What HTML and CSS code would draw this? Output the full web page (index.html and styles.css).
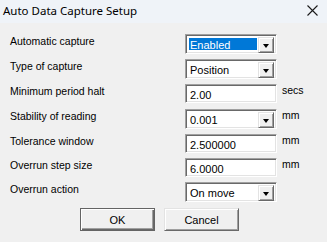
FILE: index.html
```html
<!DOCTYPE html>
<html>
<head>
<meta charset="utf-8">
<link rel="stylesheet" href="styles.css">
</head>
<body>
<div class="dialog">
  <div class="titlebar">
    <span class="title">Auto Data Capture Setup</span>
    <svg class="close" width="11" height="11" viewBox="0 0 11 11"><path d="M0.5 0.5 L10.5 10.5 M10.5 0.5 L0.5 10.5" stroke="#1a1a1a" stroke-width="1.1" fill="none"/></svg>
  </div>
  <div class="form">
    <div class="lbl">Automatic capture</div>
    <div class="combo sunken"><div class="val sel">Enabled</div><div class="btn raised"><span class="tri"></span></div></div>
    <div class="unit"></div>

    <div class="lbl">Type of capture</div>
    <div class="combo sunken"><div class="val">Position</div><div class="btn raised"><span class="tri"></span></div></div>
    <div class="unit"></div>

    <div class="lbl">Minimum period halt</div>
    <div class="edit sunken">2.00</div>
    <div class="unit">secs</div>

    <div class="lbl">Stability of reading</div>
    <div class="combo sunken"><div class="val">0.001</div><div class="btn raised"><span class="tri"></span></div></div>
    <div class="unit">mm</div>

    <div class="lbl">Tolerance window</div>
    <div class="edit sunken">2.500000</div>
    <div class="unit">mm</div>

    <div class="lbl">Overrun step size</div>
    <div class="edit sunken">6.0000</div>
    <div class="unit">mm</div>

    <div class="lbl">Overrun action</div>
    <div class="combo sunken"><div class="val">On move</div><div class="btn raised"><span class="tri"></span></div></div>
    <div class="unit"></div>
  </div>
  <div class="buttons">
    <div class="pbtn default">OK</div>
    <div class="pbtn raised">Cancel</div>
  </div>
</div>
</body>
</html>
```
FILE: styles.css
```css
html, body {
  margin: 0;
  padding: 0;
  background: #f0f0f0;
}
.dialog {
  width: 327px;
  height: 242px;
  background: #f0f0f0;
  font-family: "Liberation Sans", Arial, sans-serif;
  font-size: 11px;
  color: #000;
  overflow: hidden;
}
.titlebar {
  height: 23px;
  background: #eff3f8;
  display: flex;
  align-items: center;
  padding-left: 3px;
  padding-right: 9px;
}
.title {
  font-family: "Noto Sans", "Open Sans", sans-serif;
  font-size: 11.5px;
  color: #000;
  flex: 1;
  margin-top: -2px;
}
.close {
  margin-top: -3px;
}
.form {
  display: grid;
  grid-template-columns: 170px 92px auto;
  grid-template-rows: 25px 25px 25px 25px 24px 24px 20px;
  column-gap: 5px;
  padding: 11px 0 0 10px;
  align-items: start;
}
.lbl, .unit {
  line-height: 14px;
  font-size: 10.5px;
}
.unit {
  margin-top: -1px;
}
.sunken {
  border: 1px solid;
  border-color: #a0a0a0 #ffffff #ffffff #a0a0a0;
  box-shadow: inset 1px 1px #696969, inset -1px -1px #e3e3e3;
  background: #fff;
  box-sizing: border-box;
}
.raised {
  border: 1px solid;
  border-color: #e3e3e3 #696969 #696969 #e3e3e3;
  box-shadow: inset 1px 1px #ffffff, inset -1px -1px #a0a0a0;
  background: #f0f0f0;
  box-sizing: border-box;
}
.combo {
  height: 20px;
  display: flex;
  padding: 2px;
}
.val {
  flex: 1;
  line-height: 16px;
  padding-left: 2px;
  font-size: 11px;
}
.val.sel {
  background: #0078d7;
  color: #fff;
  margin: 1px 1px 1px 1px;
  line-height: 14px;
  padding-left: 1px;
}
.btn {
  width: 16px;
  height: 16px;
  display: flex;
  align-items: center;
  justify-content: center;
}
.tri {
  width: 0;
  height: 0;
  border-left: 3.5px solid transparent;
  border-right: 3.5px solid transparent;
  border-top: 4px solid #000;
  margin-top: 1px;
}
.edit {
  height: 19px;
  line-height: 16px;
  padding: 2px 0 0 4px;
  font-size: 11px;
}
.buttons {
  display: flex;
  gap: 9px;
  padding: 6px 0 0 80px;
}
.pbtn {
  width: 75px;
  height: 23px;
  display: flex;
  align-items: center;
  justify-content: center;
  font-size: 11px;
  box-sizing: border-box;
}
.pbtn.default {
  border: 1px solid #646464;
  box-shadow: inset 1px 1px #ffffff, inset -1px -1px #696969, inset -2px -2px #a0a0a0;
  background: #f0f0f0;
}
```
